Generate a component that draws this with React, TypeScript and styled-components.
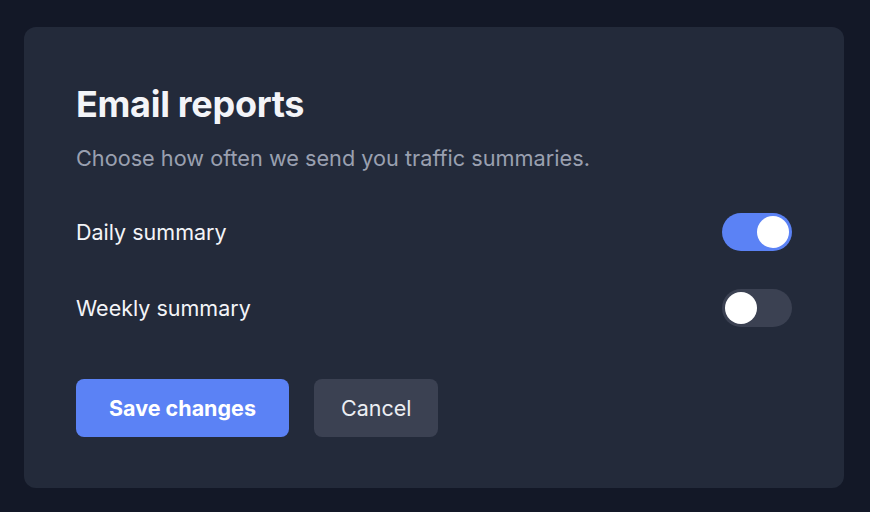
import { useState } from "react";
import styled, { createGlobalStyle } from "styled-components";

const GlobalStyle = createGlobalStyle`
  html, body {
    margin: 0;
    padding: 0;
    background-color: #131827;
  }
  body {
    font-family: Inter, "Noto Sans", sans-serif;
    -webkit-font-smoothing: antialiased;
  }
`;

const Page = styled.div`
  padding: 27px 26px 24px 24px;
  box-sizing: border-box;
  height: 512px;
`;

const Card = styled.section`
  background-color: #232a3a;
  border-radius: 12px;
  padding: 52px 52px 51px;
  height: 461px;
  box-sizing: border-box;
`;

const Title = styled.h1`
  margin: 0;
  color: #f3f4f8;
  font-size: 36px;
  font-weight: 700;
  line-height: 50px;
  letter-spacing: -0.3px;
`;

const Subtitle = styled.p`
  margin: 14px 0 0;
  color: #9aa0b0;
  font-size: 21.7px;
  line-height: 30px;
`;

const Rows = styled.div`
  display: flex;
  flex-direction: column;
  gap: 38px;
  margin-top: 40px;
`;

const Row = styled.div`
  display: flex;
  justify-content: space-between;
  align-items: center;
  height: 38px;
`;

const Label = styled.span`
  color: #f3f4f8;
  font-size: 21.5px;
`;

const Switch = styled.button<{ $on: boolean }>`
  position: relative;
  width: 70px;
  height: 38px;
  border: none;
  padding: 0;
  border-radius: 19px;
  cursor: pointer;
  background-color: ${(p) => (p.$on ? "#5b82f5" : "#3b4152")};
  &::after {
    content: "";
    position: absolute;
    top: 3px;
    left: ${(p) => (p.$on ? "35px" : "3px")};
    width: 32px;
    height: 32px;
    border-radius: 50%;
    background-color: #ffffff;
  }
`;

const Actions = styled.div`
  display: flex;
  gap: 25px;
  margin-top: 52px;
`;

const Button = styled.button<{ $primary?: boolean }>`
  height: 58px;
  border: none;
  border-radius: 8px;
  padding: 0 ${(p) => (p.$primary ? "33px" : "27px")};
  font-family: inherit;
  font-size: 21.5px;
  font-weight: ${(p) => (p.$primary ? 700 : 400)};
  color: ${(p) => (p.$primary ? "#ffffff" : "#eceef3")};
  background-color: ${(p) => (p.$primary ? "#5b82f5" : "#3b4152")};
  cursor: pointer;
`;

const App = () => {
  const [daily, setDaily] = useState(true);
  const [weekly, setWeekly] = useState(false);

  return (
    <Page>
      <GlobalStyle />
      <Card>
        <Title>Email reports</Title>
        <Subtitle>Choose how often we send you traffic summaries.</Subtitle>
        <Rows>
          <Row>
            <Label>Daily summary</Label>
            <Switch $on={daily} onClick={() => setDaily(!daily)} aria-label="Daily summary" />
          </Row>
          <Row>
            <Label>Weekly summary</Label>
            <Switch $on={weekly} onClick={() => setWeekly(!weekly)} aria-label="Weekly summary" />
          </Row>
        </Rows>
        <Actions>
          <Button $primary>Save changes</Button>
          <Button>Cancel</Button>
        </Actions>
      </Card>
    </Page>
  );
};

export default App;
